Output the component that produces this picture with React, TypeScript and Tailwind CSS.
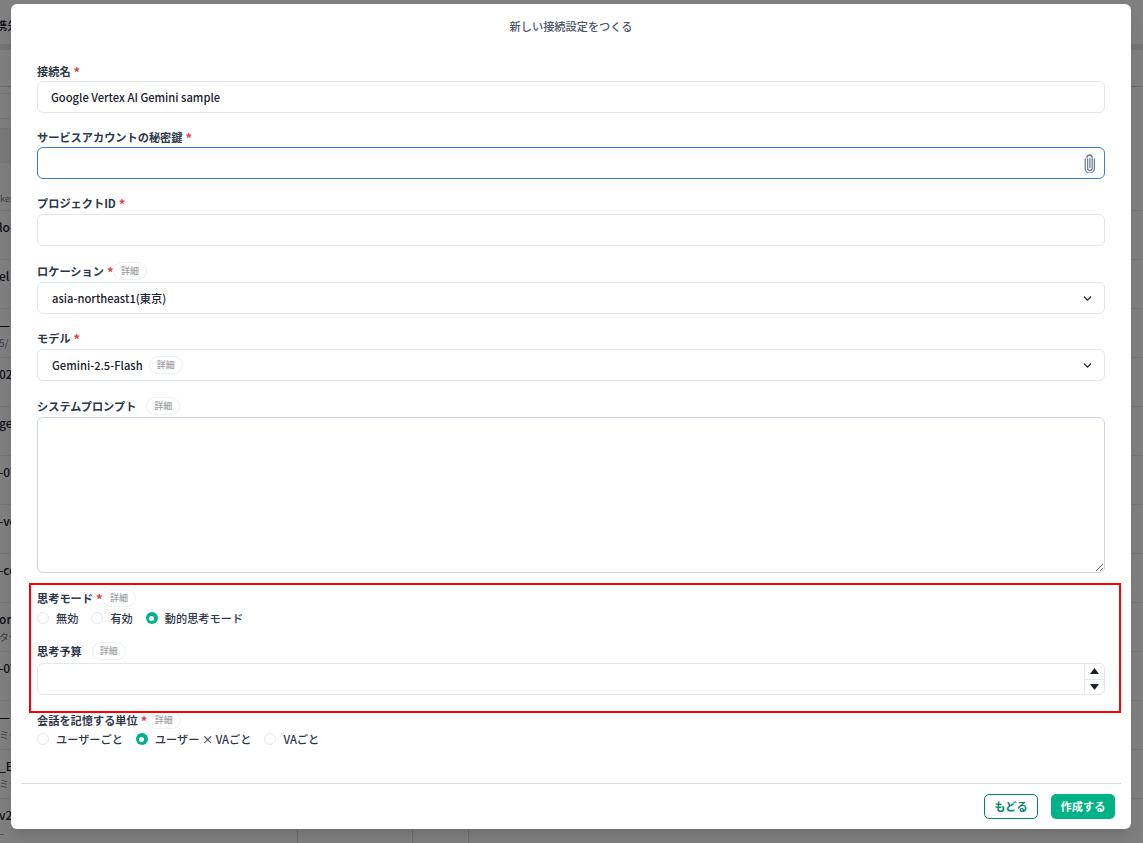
import React from "react";
import { ChevronDown } from "lucide-react";

const font = { fontFamily: '"Noto Sans CJK JP", "Noto Sans", sans-serif' };

function Star() {
  return <span className="ml-[3px] inline-block w-[6px] text-[13px] leading-none text-[#e53e3e]">*</span>;
}

function Badge({ className = "" }: { className?: string }) {
  return (
    <span className={`inline-flex h-[18px] w-[34px] shrink-0 items-center justify-center rounded-full border border-[#edf2f7] bg-white text-[9px] font-medium text-[#a0a0a0] ${className}`}>
      詳細
    </span>
  );
}

function Label({ children, className = "" }: { children: React.ReactNode; className?: string }) {
  return (
    <div className={`flex h-[18px] items-center text-[11.2px] font-bold text-[#2d3748] ${className}`}>
      {children}
    </div>
  );
}

function Radio({ label, checked = false }: { label: string; checked?: boolean }) {
  return (
    <span className="flex items-center gap-[7px]">
      {checked ? (
        <span className="flex h-[12px] w-[12px] items-center justify-center rounded-full bg-[#00b285]">
          <span className="h-[5px] w-[5px] rounded-full bg-white" />
        </span>
      ) : (
        <span className="h-[12px] w-[12px] rounded-full border border-[#e2e8f0] bg-white" />
      )}
      <span className="text-[11.2px] font-medium text-[#2d3748]">{label}</span>
    </span>
  );
}

function TextBox({ value = "" }: { value?: string }) {
  return (
    <input
      readOnly
      value={value}
      className="block h-[32px] w-full rounded-[6px] border border-[#e2e8f0] bg-white px-[13px] text-[11.2px] font-medium text-[#1a202c] outline-none"
    />
  );
}

function SelectBox({ children }: { children: React.ReactNode }) {
  return (
    <div className="flex h-[32px] items-center rounded-[6px] border border-[#e2e8f0] bg-white pl-[14px] pr-[10px] text-[11.2px] font-medium text-[#1a202c]">
      <div className="flex flex-1 items-center">{children}</div>
      <ChevronDown size={13} strokeWidth={2.5} className="text-[#1a202c]" />
    </div>
  );
}

function BgRow({ text, sub }: { text?: string; sub?: string }) {
  return (
    <div className="grid h-[49px] grid-cols-[297px_115px_56px_1fr] border-b border-[#e2e8f0]">
      <div className="-ml-[1px] flex flex-col overflow-hidden whitespace-nowrap pt-[6px]">
        <span className="text-[12px] font-medium leading-[20px] text-[#1a202c]">{text}</span>
        {sub && <span className="mt-[1px] text-[10px] leading-[14px] text-[#718096]">{sub}</span>}
      </div>
      <div className="border-l border-[#d8dde6]" />
      <div className="border-l border-[#d8dde6]" />
      <div className="border-l border-[#d8dde6]" />
    </div>
  );
}

export default function App() {
  return (
    <div className="relative h-[843px] w-[1143px] overflow-hidden bg-white" style={font}>
      {/* page behind the dialog */}
      <div className="flex flex-col">
        <div className="-ml-[4px] flex h-[44px] items-center pt-[6px] text-[11.2px] font-medium text-[#1a202c]">携先</div>
        <div className="h-[6px] bg-[#e8e8e8]" />
        <div className="h-[37px] border-b border-[#cfd3e6]" />
        <div className="h-[7px] w-[300px] border-b border-[#e2e8f0]" />
        <div className="h-[25px] w-[300px] border-b border-[#e2e8f0]" />
        <div className="h-[10px] w-[300px] border-b border-[#e2e8f0]" />
        <div className="h-[34px] w-[300px] border-b border-[#e2e8f0] bg-[#f0f0f0]" />
        <div className="flex h-[48px] items-end border-b border-[#e2e8f0] pb-[5px] text-[9px] text-[#718096]">ker</div>
        <BgRow text="lo-" />
        <BgRow text="el" />
        <BgRow text="—" sub="5/" />
        <BgRow text="02" />
        <BgRow text="ge" />
        <BgRow text="-07" />
        <BgRow text="-ve" />
        <BgRow text="-cc" />
        <BgRow text="om" sub="ター" />
        <BgRow text="-07" />
        <BgRow text="—" sub="ミク" />
        <BgRow text="_Br" sub="ミク" />
        <BgRow text="v2" sub="–" />
      </div>

      {/* scrim */}
      <div className="absolute inset-0 bg-black/50" />

      {/* dialog */}
      <div className="absolute left-[11px] top-[4px] flex h-[825px] w-[1120px] flex-col rounded-[6px] bg-white shadow-lg">
        <div className="flex h-[44px] items-center justify-center text-[11.2px] font-medium text-[#4a5568]">
          新しい接続設定をつくる
        </div>

        <div className="flex-1 px-[26px] pt-[14px]">
          <Label className="mb-px">接続名<Star /></Label>
          <TextBox value="Google Vertex AI Gemini sample" />

          <Label className="mt-[15px] mb-px">サービスアカウントの秘密鍵<Star /></Label>
          <div className="flex h-[32px] items-center justify-end rounded-[6px] border border-[#3182ce] bg-white pr-[8px]">
            <svg width="12" height="19" viewBox="0 0 12 19" fill="none" stroke="#718096" strokeWidth="1.3" strokeLinecap="round">
              <path d="M3.6 5v9.2a2.3 2.3 0 0 0 4.6 0V3.6a2.6 2.6 0 0 0-5.2 0" />
              <path d="M1.2 5v9.4a4.5 4.5 0 0 0 9.2 0V5" />
              <path d="M5.9 4.5v9" />
            </svg>
          </div>

          <Label className="mt-[15px] mb-[2px]">プロジェクトID<Star /></Label>
          <TextBox />

          <Label className="mt-[16px] mb-[2px]">ロケーション<Star /><Badge /></Label>
          <SelectBox>asia-northeast1(東京)</SelectBox>

          <Label className="mt-[15px] mb-[2px]">モデル<Star /></Label>
          <SelectBox>
            Gemini-2.5-Flash
            <Badge className="ml-[6px]" />
          </SelectBox>

          <Label className="mt-[16px] mb-[2px]">システムプロンプト<Badge className="ml-[10px]" /></Label>
          <textarea
            readOnly
            className="block h-[156px] w-full rounded-[6px] border border-[#cbd5e0] bg-white outline-none"
          />

          <Label className="mt-[16px]">思考モード<Star /><Badge /></Label>
          <div className="mt-[3px] flex h-[16px] items-center gap-[13px]">
            <Radio label="無効" />
            <Radio label="有効" />
            <Radio label="動的思考モード" checked />
          </div>

          <Label className="mt-[16px] mb-[3px]">思考予算<Badge className="ml-[10px]" /></Label>
          <div className="flex h-[32px] rounded-[6px] border border-[#e2e8f0] bg-white">
            <div className="flex-1" />
            <div className="flex w-[20px] flex-col border-l border-[#e2e8f0]">
              <div className="flex flex-1 items-center justify-center border-b border-[#e2e8f0]">
                <svg width="9" height="6" viewBox="0 0 9 6"><path d="M4.5 0 9 6H0z" fill="#1a202c" /></svg>
              </div>
              <div className="flex flex-1 items-center justify-center">
                <svg width="9" height="6" viewBox="0 0 9 6"><path d="M0 0h9L4.5 6z" fill="#1a202c" /></svg>
              </div>
            </div>
          </div>

          <Label className="mt-[16px]">会話を記憶する単位<Star /><Badge /></Label>
          <div className="mt-[2px] flex h-[16px] items-center gap-[13px]">
            <Radio label="ユーザーごと" />
            <Radio label="ユーザー × VAごと" checked />
            <Radio label="VAごと" />
          </div>
        </div>

        <div className="mx-[10px] flex h-[46px] items-start justify-end gap-[13px] border-t border-[#d9dce1] pr-[6px] pt-[10px]">
          <button className="flex h-[25px] w-[54px] items-center justify-center rounded-[5px] border border-[#00866a] bg-white text-[11.2px] font-bold text-[#00866a]">
            もどる
          </button>
          <button className="flex h-[25px] w-[64px] items-center justify-center rounded-[5px] bg-[#00b285] text-[11.2px] font-bold text-white">
            作成する
          </button>
        </div>
      </div>

      {/* red annotation frame */}
      <div className="absolute left-[29px] top-[583px] h-[130px] w-[1092px] border-2 border-[#ff0000]" />
    </div>
  );
}
